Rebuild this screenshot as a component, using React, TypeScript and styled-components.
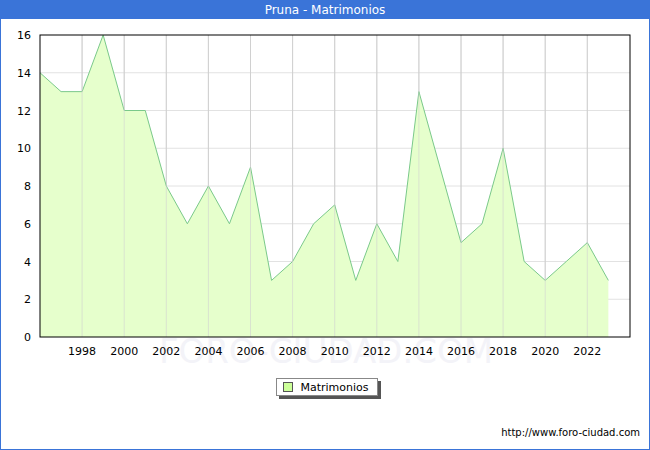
import styled, { createGlobalStyle } from 'styled-components';

const Global = createGlobalStyle`
  html, body { margin: 0; padding: 0; background: #fff; }
  body { font-family: "DejaVu Sans", Verdana, sans-serif; }
`;

const Frame = styled.div`
  width: 650px;
  height: 450px;
  box-sizing: border-box;
  border: 1px solid #3a74d8;
  border-top: none;
  display: flex;
  flex-direction: column;
`;

const TitleBar = styled.div`
  height: 19px;
  background: #3a74d8;
  color: #fff;
  font-size: 12px;
  display: flex;
  align-items: center;
  justify-content: center;
  margin: 0 -1px;
`;

const Chart = styled.svg`
  display: block;
  width: 648px;
  height: 345px;
`;

const LegendRow = styled.div`
  display: flex;
  justify-content: center;
  margin-top: 14px;
  padding-left: 4px;
`;

const LegendBox = styled.div`
  display: flex;
  align-items: center;
  gap: 7px;
  height: 16px;
  padding: 0 8px 0 6px;
  border: 1px solid #888;
  box-shadow: 3px 3px 0 #555;
  font-size: 11px;
  color: #000;
`;

const Swatch = styled.span`
  width: 8px;
  height: 8px;
  background: #ccff99;
  border: 1px solid #555;
`;

const Footer = styled.div`
  margin-top: auto;
  padding: 0 9px 11px 0;
  text-align: right;
  font-size: 10px;
  color: #000;
`;

const data = [14, 13, 13, 16, 12, 12, 8, 6, 8, 6, 9, 3, 4, 6, 7, 3, 6, 4, 13, 9, 5, 6, 10, 4, 3, 4, 5, 3];
const L = 39, R = 629, T = 16, B = 318;
const xs = (i: number) => L + i * 21.05;
const ys = (v: number) => B - (v * (B - T)) / 16;

export default function App() {
  const line = data.map((v, i) => `${xs(i)},${ys(v)}`).join(' ');
  const area = `${xs(0)},${B} ${line} ${xs(data.length - 1)},${B}`;
  const ticks = Array.from({ length: 13 }, (_, k) => 1998 + k * 2);
  return (
    <>
      <Global />
      <Frame>
        <TitleBar>Pruna - Matrimonios</TitleBar>
        <Chart viewBox="0 0 648 345">
          {[2, 4, 6, 8, 10, 12, 14].map(v => (
            <line key={v} x1={L} x2={R} y1={ys(v)} y2={ys(v)} stroke="#e2e2e2" />
          ))}
          {ticks.map((_, k) => (
            <line key={k} x1={xs(2 + k * 2)} x2={xs(2 + k * 2)} y1={T} y2={B} stroke="#d0d0d0" />
          ))}
          <polygon points={area} fill="#e6ffcc" />
          <polyline points={line} fill="none" stroke="#7ac98a" strokeWidth={1} />
          {ticks.map((_, k) => (
            <line key={'g' + k} x1={xs(2 + k * 2)} x2={xs(2 + k * 2)} y1={T} y2={B} stroke="#d0d0d0" strokeOpacity={0.6} />
          ))}
          <g aria-hidden="true">
            <text x={325} y={344} fontSize={34} fill="#f3f3f8" textAnchor="middle" fontFamily="DejaVu Sans">FORO-CIUDAD.COM</text>
          </g>
          <rect x={L} y={T} width={R - L} height={B - T} fill="none" stroke="#000" />
          {[0, 2, 4, 6, 8, 10, 12, 14, 16].map(v => (
            <text key={v} x={L - 9} y={ys(v) + 4} fontSize={11} textAnchor="end" fill="#000">{v}</text>
          ))}
          {ticks.map((yr, k) => (
            <text key={yr} x={xs(2 + k * 2)} y={336} fontSize={11} textAnchor="middle" fill="#000">{yr}</text>
          ))}
        </Chart>
        <LegendRow>
          <LegendBox><Swatch />Matrimonios</LegendBox>
        </LegendRow>
        <Footer>http://www.foro-ciudad.com</Footer>
      </Frame>
    </>
  );
}
